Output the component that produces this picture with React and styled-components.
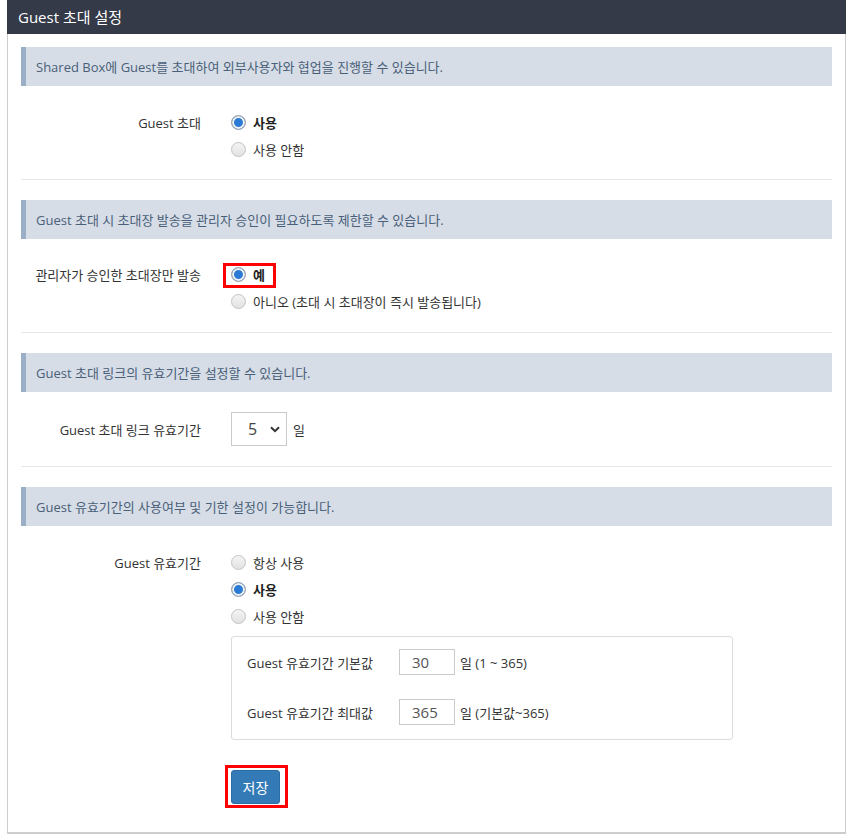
import React from "react";
import styled, { createGlobalStyle } from "styled-components";

const GlobalStyle = createGlobalStyle`
  body {
    margin: 0;
    background: #fff;
    font-family: "Open Sans", "Noto Sans CJK KR", sans-serif;
    font-size: 13px;
    color: #333;
  }
`;

const Panel = styled.div`
  margin-left: 7px;
  width: 839px;
`;

const Header = styled.div`
  height: 34px;
  background: #343a48;
  color: #fff;
  font-size: 15px;
  line-height: 34px;
  padding-left: 11px;
`;

const Body = styled.div`
  border: 1px solid #cdcdcd;
  border-top: none;
  border-bottom-width: 2px;
  padding: 13px 13px 28px 13px;
`;

const Section = styled.div`
  border-bottom: ${(p) => (p.$last ? "none" : "1px solid #e6e6e6")};
  margin-bottom: ${(p) => (p.$last ? "0" : "20px")};
`;

const InfoBar = styled.div`
  height: 39px;
  background: #d6dde7;
  border-left: 5px solid #9aafc5;
  color: #4a5f78;
  padding-left: 10px;
  display: flex;
  align-items: center;
`;

const Fields = styled.div`
  padding: ${(p) => p.$pad || "23px 0 16px"};
`;

const Row = styled.div`
  display: grid;
  grid-template-columns: 180px 1fr;
  column-gap: 30px;
  align-items: start;
`;

const Label = styled.div`
  text-align: right;
  display: flex;
  align-items: center;
  justify-content: flex-end;
  height: ${(p) => p.$h || "27px"};
`;

const Options = styled.div`
  display: flex;
  flex-direction: column;
  align-items: flex-start;
`;

const Option = styled.label`
  position: relative;
  display: inline-flex;
  align-items: center;
  gap: 7px;
  height: 27px;
  font-weight: ${(p) => (p.$on ? 700 : 400)};
  color: ${(p) => (p.$on ? "#222" : "#333")};
`;

const Radio = styled.span`
  width: 15px;
  height: 15px;
  box-sizing: border-box;
  border-radius: 50%;
  border: 1px solid ${(p) => (p.$on ? "#a9a9a9" : "#c3c3c3")};
  background: ${(p) =>
    p.$on ? "#2b7bd6" : "linear-gradient(#f4f4f4, #e2e2e2)"};
  box-shadow: ${(p) => (p.$on ? "inset 0 0 0 2px #f2f2f2" : "none")};
  flex: none;
`;

const Highlight = styled.span`
  position: relative;
  display: inline-flex;
  &::after {
    content: "";
    position: absolute;
    top: ${(p) => p.$t}px;
    bottom: ${(p) => p.$b}px;
    left: ${(p) => p.$l}px;
    right: ${(p) => p.$r}px;
    border: 3px solid #f00;
    pointer-events: none;
  }
`;

const Inline = styled.div`
  display: flex;
  align-items: center;
  gap: 6px;
`;

const SelectBox = styled.div`
  position: relative;
  width: 56px;
  height: 34px;
  box-sizing: border-box;
  border: 1px solid #cacaca;
  background: #fff;
  font-size: 16px;
  color: #444;
  display: flex;
  align-items: center;
  padding-left: 16px;
`;

const Chevron = styled.svg`
  position: absolute;
  right: 6px;
  top: 13px;
`;

const SubBox = styled.div`
  margin-top: 6px;
  width: 502px;
  box-sizing: border-box;
  border: 1px solid #dcdcdc;
  border-radius: 3px;
  padding: 12px 16px 14px 15px;
  display: flex;
  flex-direction: column;
  gap: 24px;
`;

const SubRow = styled.div`
  display: grid;
  grid-template-columns: 147px auto 1fr;
  align-items: center;
  column-gap: 5px;
`;

const NumInput = styled.div`
  width: 56px;
  height: 26px;
  box-sizing: border-box;
  border: 1px solid #cacaca;
  font-size: 15px;
  color: #555;
  display: flex;
  align-items: center;
  padding-left: 12px;
`;

const ButtonWrap = styled.div`
  margin-top: 30px;
`;

const SaveButton = styled.button`
  width: 49px;
  height: 34px;
  border: 1px solid #2e6da4;
  border-radius: 3px;
  background: #337ab7;
  color: #fff;
  font-family: inherit;
  font-size: 14px;
  padding: 0;
`;

const RadioOption = ({ on, children }) => (
  <Option $on={on}>
    <Radio $on={on} />
    {children}
  </Option>
);

export default function App() {
  return (
    <>
      <GlobalStyle />
      <Panel>
        <Header>Guest 초대 설정</Header>
        <Body>
          <Section>
            <InfoBar>Shared Box에 Guest를 초대하여 외부사용자와 협업을 진행할 수 있습니다.</InfoBar>
            <Fields>
              <Row>
                <Label>Guest 초대</Label>
                <Options>
                  <RadioOption on>사용</RadioOption>
                  <RadioOption>사용 안함</RadioOption>
                </Options>
              </Row>
            </Fields>
          </Section>

          <Section>
            <InfoBar>Guest 초대 시 초대장 발송을 관리자 승인이 필요하도록 제한할 수 있습니다.</InfoBar>
            <Fields $pad="22px 0 17px">
              <Row>
                <Label>관리자가 승인한 초대장만 발송</Label>
                <Options>
                  <Highlight $t={2} $b={0} $l={-8} $r={-11}>
                    <RadioOption on>예</RadioOption>
                  </Highlight>
                  <RadioOption>아니오 (초대 시 초대장이 즉시 발송됩니다)</RadioOption>
                </Options>
              </Row>
            </Fields>
          </Section>

          <Section>
            <InfoBar>Guest 초대 링크의 유효기간을 설정할 수 있습니다.</InfoBar>
            <Fields $pad="20px 0 20px">
              <Row>
                <Label $h="34px">Guest 초대 링크 유효기간</Label>
                <Inline>
                  <SelectBox>
                    5
                    <Chevron width="10" height="7" viewBox="0 0 10 7">
                      <path d="M1 1.2 L5 5.2 L9 1.2" fill="none" stroke="#333" strokeWidth="2" />
                    </Chevron>
                  </SelectBox>
                  <span>일</span>
                </Inline>
              </Row>
            </Fields>
          </Section>

          <Section $last>
            <InfoBar>Guest 유효기간의 사용여부 및 기한 설정이 가능합니다.</InfoBar>
            <Fields $pad="23px 0 0">
              <Row>
                <Label>Guest 유효기간</Label>
                <div>
                  <Options>
                    <RadioOption>항상 사용</RadioOption>
                    <RadioOption on>사용</RadioOption>
                    <RadioOption>사용 안함</RadioOption>
                  </Options>
                  <SubBox>
                    <SubRow>
                      <span>Guest 유효기간 기본값</span>
                      <NumInput>30</NumInput>
                      <span>일 (1 ~ 365)</span>
                    </SubRow>
                    <SubRow>
                      <span>Guest 유효기간 최대값</span>
                      <NumInput>365</NumInput>
                      <span>일 (기본값~365)</span>
                    </SubRow>
                  </SubBox>
                  <ButtonWrap>
                    <Highlight $t={-5} $b={-4} $l={-6} $r={-8}>
                      <SaveButton>저장</SaveButton>
                    </Highlight>
                  </ButtonWrap>
                </div>
              </Row>
            </Fields>
          </Section>
        </Body>
      </Panel>
    </>
  );
}
